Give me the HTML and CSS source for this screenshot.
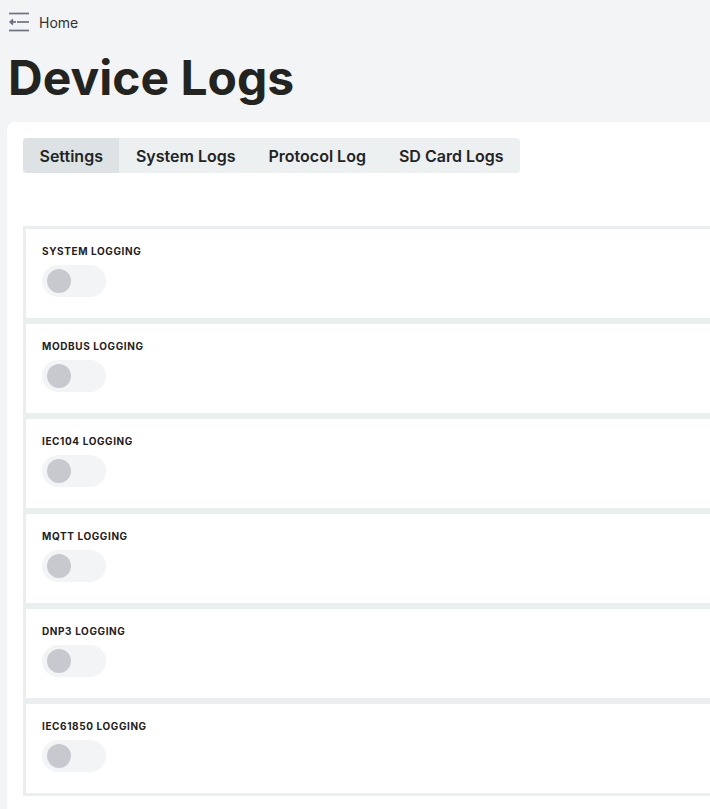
FILE: index.html
```html
<!DOCTYPE html>
<html lang="en">
<head>
<meta charset="utf-8">
<title>Device Logs</title>
<link rel="stylesheet" href="styles.css">
</head>
<body>
<header class="page-header">
  <nav class="breadcrumb">
    <svg class="back-icon" width="22" height="20" viewBox="0 0 22 20" fill="none" stroke="#6b7280" stroke-width="1.7" stroke-linecap="butt">
      <path d="M0 1.5h20"/>
      <path d="M1.5 10h5.5"/>
      <path d="M4 7.5l-2.8 2.5 2.8 2.5" fill="#6b7280" stroke-linejoin="miter"/>
      <path d="M8 10h12"/>
      <path d="M0 18.5h20"/>
    </svg>
    <span class="crumb">Home</span>
  </nav>
  <h1 class="title">Device Logs</h1>
</header>
<main class="card">
  <div class="tabs">
    <button class="tab active">Settings</button>
    <button class="tab">System Logs</button>
    <button class="tab">Protocol Log</button>
    <button class="tab">SD Card Logs</button>
  </div>
  <section class="settings">
    <div class="row"><div class="label">SYSTEM LOGGING</div><div class="toggle"><span class="knob"></span></div></div>
    <div class="row"><div class="label">MODBUS LOGGING</div><div class="toggle"><span class="knob"></span></div></div>
    <div class="row"><div class="label">IEC104 LOGGING</div><div class="toggle"><span class="knob"></span></div></div>
    <div class="row"><div class="label">MQTT LOGGING</div><div class="toggle"><span class="knob"></span></div></div>
    <div class="row"><div class="label">DNP3 LOGGING</div><div class="toggle"><span class="knob"></span></div></div>
    <div class="row"><div class="label">IEC61850 LOGGING</div><div class="toggle"><span class="knob"></span></div></div>
  </section>
</main>
</body>
</html>
```

FILE: styles.css
```css
html, body {
  margin: 0;
  padding: 0;
  overflow: hidden;
}
body {
  background: #f3f4f6;
  font-family: Inter, "Noto Sans", sans-serif;
  color: #232323;
  width: 740px;
}
.page-header {
  padding: 12px 0 0 9px;
}
.breadcrumb {
  display: flex;
  align-items: center;
  height: 20px;
  gap: 10px;
}
.back-icon {
  display: block;
}
.crumb {
  font-size: 14px;
  color: #333333;
  margin-left: -2px;
}
.title {
  margin: 17px 0 0 -1px;
  font-size: 48px;
  font-weight: 700;
  line-height: 57px;
  color: #232420;
}
.card {
  margin: 16px 0 0 7px;
  background: #ffffff;
  border-radius: 8px 0 0 0;
  padding: 16px 0 20px 16px;
}
.tabs {
  display: inline-flex;
  background: #edf0f1;
  border-radius: 4px;
  overflow: hidden;
  height: 35px;
}
.tab {
  border: 0;
  background: transparent;
  font-family: Inter, "Noto Sans", sans-serif;
  font-size: 16px;
  font-weight: 600;
  color: #232323;
  padding: 0 16.5px;
  height: 35px;
  cursor: pointer;
}
.tab.active {
  background: #dde3e5;
}
.settings {
  margin-top: 53px;
}
.row {
  border: 3px solid #ebeeee;
  padding: 16px 16px 21px 16px;
  height: 52px;
}
.label {
  font-size: 10px;
  line-height: 12px;
  font-weight: 700;
  letter-spacing: 0.6px;
  color: #1f2020;
}
.toggle {
  margin-top: 8px;
  width: 64px;
  height: 32px;
  border-radius: 16px;
  background: #f3f4f6;
  display: flex;
  align-items: center;
  padding-left: 5px;
  box-sizing: border-box;
}
.knob {
  width: 24px;
  height: 24px;
  border-radius: 50%;
  background: #c7c9ce;
}
```
